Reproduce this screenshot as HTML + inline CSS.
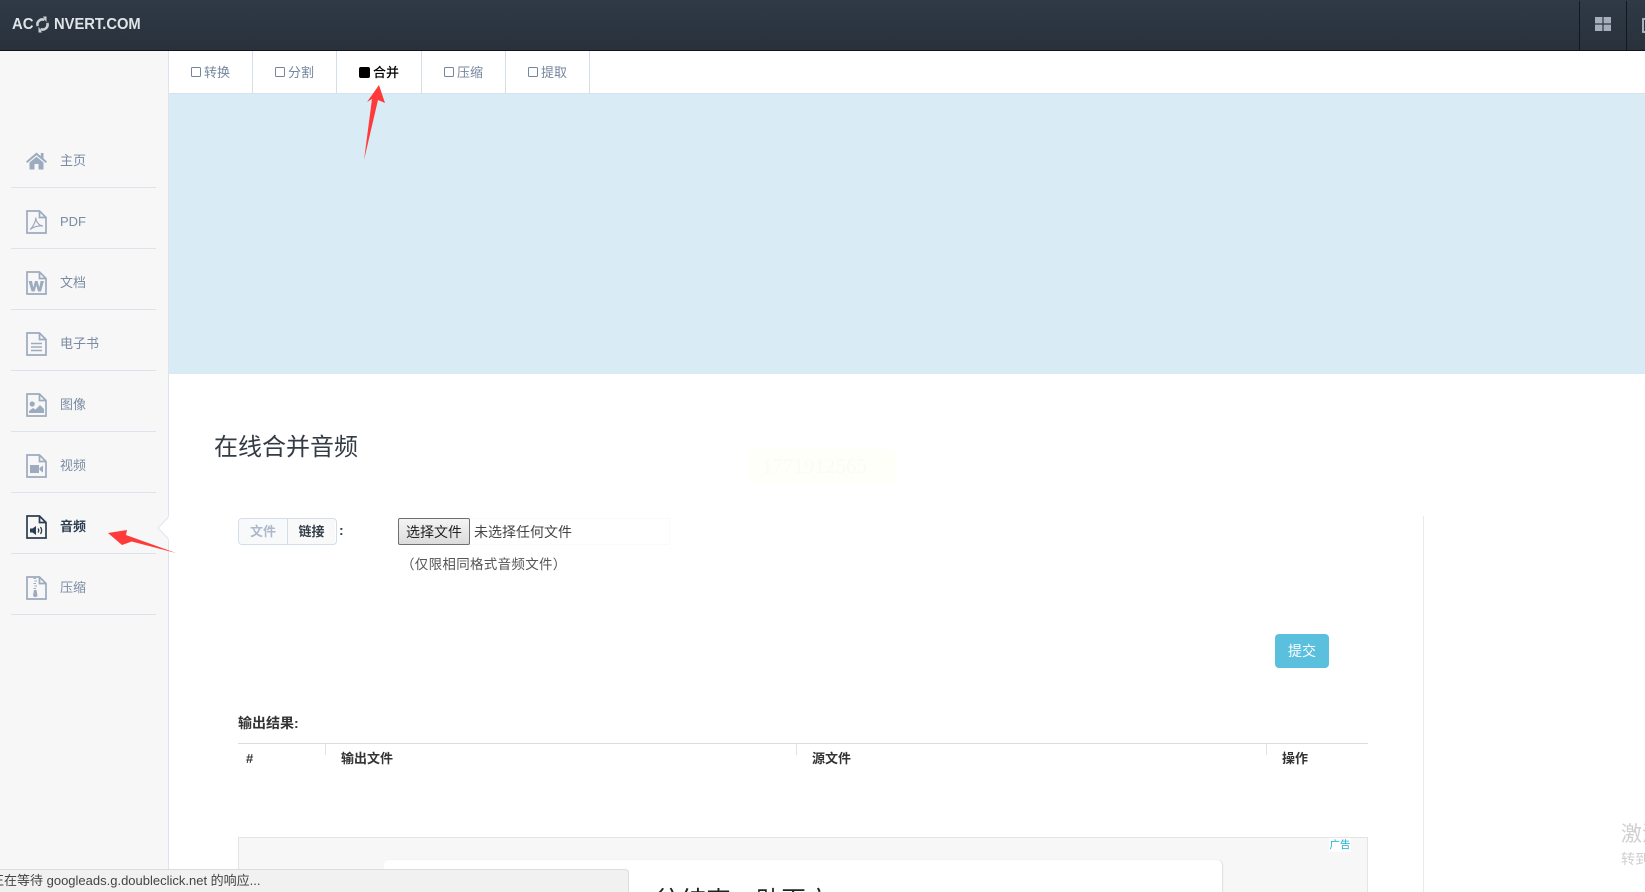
<!DOCTYPE html>
<html lang="zh-CN"><head><meta charset="utf-8"><title>在线合并音频</title>
<style>
html,body{margin:0;padding:0;width:1645px;height:892px;overflow:hidden;background:#fff}
body{position:relative;font-family:"Liberation Sans","Noto Sans CJK SC",sans-serif;font-size:13px;color:#333}
.a{position:absolute;white-space:nowrap}
.t{line-height:20px;height:20px}
.nav{color:#7a8ba3;font-size:13px;left:60px}
.hr{position:absolute;left:11px;width:145px;height:1px;background:#dde3ec}
.ic{position:absolute;left:26px;width:21px;height:24px}
.tabline{position:absolute;top:51px;width:1px;height:42px;background:#d6dfe9}
.cb{position:absolute;top:67px;width:8px;height:8px;border:1.3px solid #74869f;border-radius:1.5px}
.tab{color:#74869f;font-size:13px;top:63px}
.th{font-weight:bold;color:#333;font-size:13px;top:749px}
.vl{position:absolute;top:744px;width:1px;height:11px;background:#dfe4ea}
.clip{position:absolute;overflow:hidden}
</style></head><body>

<!-- header -->
<div class="a" style="left:0;top:0;width:1645px;height:50px;background:linear-gradient(#2e3a46,#29313c);border-bottom:1px solid #12161b"></div>
<div class="a" style="left:12px;top:15px;font-size:16px;line-height:20px;font-weight:bold;color:#dfe4e8;transform:scaleX(.93);transform-origin:0 0">AC</div>
<svg class="a" style="left:36px;top:16px" width="13" height="17" viewBox="0 0 13 17"><path d="M1.8 10A4.8 4.8 0 0 1 8.5 4M11.2 7A4.8 4.8 0 0 1 4.5 13" fill="none" stroke="#c9ced3" stroke-width="2.6"/><path d="M7 .5L10.5 .5L10.5 6.5ZM6 16.5L2.5 16.5L2.5 10.5Z" fill="#c9ced3"/></svg>
<div class="a" style="left:53.5px;top:15px;font-size:16px;line-height:20px;font-weight:bold;color:#dfe4e8;transform:scaleX(.92);transform-origin:0 0">NVERT.COM</div>
<div class="a" style="left:1579px;top:1px;width:1px;height:49px;background:#14181d"></div>
<div class="a" style="left:1626px;top:1px;width:1px;height:49px;background:#14181d"></div>
<svg class="a" style="left:1595px;top:17px" width="16" height="14"><path d="M0 0H7.4V6.4H0ZM8.6 0H16V6.4H8.6ZM0 7.6H7.4V14H0ZM8.6 7.6H16V14H8.6Z" fill="#a5aeba"/></svg>
<div class="a" style="left:1642px;top:18px;width:1px;height:11px;border:2px solid #a5aeba;border-right:0;border-radius:1px 0 0 1px"></div>

<!-- sidebar -->
<div class="a" style="left:0;top:51px;width:168px;height:841px;background:#f7f7f7;border-right:1px solid #dde4ee"></div>

<svg class="a" style="left:26px;top:152px" width="21" height="18" viewBox="0 0 21 18"><path d="M10.5 .5L0 9.5L1.2 11L10.5 3.2L19.8 11L21 9.5L17.5 6.5V1H14.8V4.2ZM3.5 10.5L10.5 4.7L17.5 10.5V17.5H12.5V12H8.5V17.5H3.5Z" fill="#9dabbf"/></svg>
<div class="a t nav" style="top:151px">主页</div><div class="hr" style="top:187px"></div>

<svg class="ic" style="top:210px" viewBox="0 0 21 24"><path d="M1 1H13.5L20 7.5V23H1Z M13.5 1V7.5H20" fill="none" stroke="#9dabbf" stroke-width="1.7"/><path d="M4 19.5C7 17 10 11 9.8 7.5C10 12 13 15.5 17 16C13 15.5 8 16.5 4 19.5Z" fill="none" stroke="#9dabbf" stroke-width="1.2"/></svg>
<div class="a t nav" style="top:212px">PDF</div><div class="hr" style="top:248px"></div>

<svg class="ic" style="top:271px" viewBox="0 0 21 24"><path d="M1 1H13.5L20 7.5V23H1Z M13.5 1V7.5H20" fill="none" stroke="#9dabbf" stroke-width="1.7"/><path d="M2.5 10H6L7.3 16.5L9 10H11.6L13.3 16.5L14.6 10H18L15 20.5H12L10.3 14.5L8.6 20.5H5.6Z" fill="#9dabbf"/></svg>
<div class="a t nav" style="top:273px">文档</div><div class="hr" style="top:309px"></div>

<svg class="ic" style="top:332px" viewBox="0 0 21 24"><path d="M1 1H13.5L20 7.5V23H1Z M13.5 1V7.5H20" fill="none" stroke="#9dabbf" stroke-width="1.7"/><path d="M5 11.5H16M5 15H16M5 18.5H16" stroke="#9dabbf" stroke-width="1.5"/></svg>
<div class="a t nav" style="top:334px">电子书</div><div class="hr" style="top:370px"></div>

<svg class="ic" style="top:393px" viewBox="0 0 21 24"><path d="M1 1H13.5L20 7.5V23H1Z M13.5 1V7.5H20" fill="none" stroke="#9dabbf" stroke-width="1.7"/><circle cx="6.2" cy="11" r="2.6" fill="#9dabbf"/><path d="M3 20V18L7 15L9.5 16.5L14 12L18 16V20Z" fill="#9dabbf"/></svg>
<div class="a t nav" style="top:395px">图像</div><div class="hr" style="top:431px"></div>

<svg class="ic" style="top:454px" viewBox="0 0 21 24"><path d="M1 1H13.5L20 7.5V23H1Z M13.5 1V7.5H20" fill="none" stroke="#9dabbf" stroke-width="1.7"/><path d="M4 11H13V19H4ZM13.5 14L17 11.5V18.5L13.5 16Z" fill="#9dabbf"/></svg>
<div class="a t nav" style="top:456px">视频</div><div class="hr" style="top:492px"></div>

<svg class="ic" style="top:515px" viewBox="0 0 21 24"><path d="M1 1H13.5L20 7.5V23H1Z M13.5 1V7.5H20" fill="none" stroke="#2d3e50" stroke-width="1.7"/><path d="M4 13.5H6.5L10 11V20L6.5 17.5H4Z" fill="#2d3e50"/><path d="M12 13.5Q13.5 15.5 12 17.5M14.5 12Q16.8 15.5 14.5 19" fill="none" stroke="#2d3e50" stroke-width="1.3"/></svg>
<div class="a t nav" style="top:517px;color:#2d3e50;font-weight:bold">音频</div><div class="hr" style="top:553px"></div>

<svg class="ic" style="top:576px" viewBox="0 0 21 24"><path d="M1 1H13.5L20 7.5V23H1Z M13.5 1V7.5H20" fill="none" stroke="#9dabbf" stroke-width="1.7"/><path d="M7.5 2.5H10M8.5 5H11M7.5 7.5H10M8.5 10H11M7.5 12.5H10" stroke="#9dabbf" stroke-width="1.1"/><path d="M8 14H10.5L11.5 19.5A2.4 2.4 0 0 1 7 19.5Z" fill="#9dabbf"/></svg>
<div class="a t nav" style="top:578px">压缩</div><div class="hr" style="top:614px"></div>

<!-- notch -->
<svg class="a" style="left:157px;top:516px" width="13" height="24"><path d="M12 0L1 12L12 24Z" fill="#fff"/><path d="M11.5 1L1 12L11.5 23" fill="none" stroke="#dde4ee"/></svg>

<!-- tabs -->
<div class="a" style="left:169px;top:51px;width:1476px;height:42px;background:#fff"></div>
<div class="tabline" style="left:252px"></div><div class="tabline" style="left:336px"></div><div class="tabline" style="left:421px"></div><div class="tabline" style="left:505px"></div><div class="tabline" style="left:589px"></div>
<span class="cb" style="left:191px"></span><div class="a t tab" style="left:204px">转换</div>
<span class="cb" style="left:275px"></span><div class="a t tab" style="left:288px">分割</div>
<span class="a" style="left:359px;top:67px;width:11px;height:11px;background:#000;border-radius:2px"></span><div class="a t tab" style="left:373px;color:#000;font-weight:500">合并</div>
<span class="cb" style="left:444px"></span><div class="a t tab" style="left:457px">压缩</div>
<span class="cb" style="left:528px"></span><div class="a t tab" style="left:541px">提取</div>

<!-- banner -->
<div class="a" style="left:169px;top:93px;width:1476px;height:281px;background:#d9ecf5;border-top:1px solid #d6e3ee;box-sizing:border-box"></div>

<!-- arrows -->
<svg class="a" style="left:0;top:0" width="1645" height="892"><path d="M379 85L385 103L378 100L364 160L372 99L367 102Z" fill="#ff3a3a"/><path d="M108 533L127 530L126 535L176 553L131.7 541.5L122 545Z" fill="#ff3a3a"/></svg>

<!-- title -->
<div class="a" style="left:214px;top:430px;font-size:24px;line-height:36px;color:#333b44">在线合并音频</div>

<!-- watermark -->
<div class="a" style="left:749px;top:449px;width:147px;height:34px;background:#fffffa;border-radius:6px"></div>
<div class="a" style="left:762px;top:454px;font-family:'Liberation Serif',serif;font-size:21px;line-height:24px;color:#fbfbf5">1771912565</div>

<!-- toggle -->
<div class="a" style="left:238px;top:518px;width:97px;height:25px;border:1px solid #d3deea;border-radius:4px;background:#fff"></div>
<div class="a" style="left:239px;top:519px;width:48px;height:25px;background:#f7f9fb;border-right:1px solid #d3deea;border-radius:3px 0 0 3px;text-align:center;line-height:25px;font-weight:bold;font-size:13px;color:#adb9c9">文件</div>
<div class="a" style="left:288px;top:519px;width:47px;height:25px;background:#f9f9f9;border-radius:0 3px 3px 0;text-align:center;line-height:25px;font-weight:bold;font-size:13px;color:#333d49">链接</div>
<div class="a" style="left:339px;top:519px;line-height:22px;font-weight:bold;font-size:14px;color:#333d49">:</div>

<!-- file input -->
<div class="a" style="left:398px;top:518px;width:270px;height:25px;border:1px solid #fafafa"></div>
<div class="a" style="left:398px;top:518px;width:70px;height:25px;border:1px solid #707070;border-radius:2px;background:linear-gradient(#f4f4f4,#dcdcdc);text-align:center;line-height:26px;font-size:14px;color:#222">选择文件</div>
<div class="a" style="left:474px;top:518px;line-height:28px;font-size:14px;color:#444">未选择任何文件</div>
<div class="a" style="left:401px;top:555px;line-height:20px;font-size:13.5px;letter-spacing:.3px;color:#555">（仅限相同格式音频文件）</div>

<!-- submit -->
<div class="a" style="left:1275px;top:634px;width:54px;height:34px;background:#5bc0de;border-radius:4px;text-align:center;line-height:34px;color:#fff;font-size:14px">提交</div>

<!-- right rule -->
<div class="a" style="left:1423px;top:516px;width:1px;height:376px;background:#eaeaea"></div>

<!-- results -->
<div class="a" style="left:238px;top:713px;line-height:20px;font-weight:bold;font-size:14px;color:#333">输出结果:</div>
<div class="a" style="left:238px;top:743px;width:1130px;height:1px;background:#dcdcdc"></div>
<div class="vl" style="left:325px"></div><div class="vl" style="left:796px"></div><div class="vl" style="left:1266px"></div>
<div class="a t th" style="left:246px">#</div>
<div class="a t th" style="left:341px">输出文件</div>
<div class="a t th" style="left:812px">源文件</div>
<div class="a t th" style="left:1282px">操作</div>

<!-- ad -->
<div class="a" style="left:238px;top:837px;width:1128px;height:55px;background:#f7f7f7;border:1px solid #e4e4e4;border-bottom:0"></div>
<div class="a" style="left:1329px;top:838px;width:22px;height:14px;background:#fff;color:#12b5d0;font-size:10.5px;line-height:14px;text-align:center">广告</div>
<div class="a" style="left:384px;top:860px;width:838px;height:32px;background:#fff;border-radius:5px 5px 0 0;box-shadow:1px 0 1px #ddd"></div>
<div class="clip" style="left:640px;top:870px;width:240px;height:22px"><div class="a" style="left:16px;top:15px;font-size:25px;line-height:32px;color:#222">往结束一贴页方</div></div>

<!-- status bubble -->
<div class="a" style="left:0;top:869px;width:629px;height:23px;background:#f1f1f1;border:1px solid #dcdcdc;border-left:0;border-bottom:0;border-radius:0 4px 0 0;box-sizing:border-box"></div>
<div class="clip" style="left:0;top:869px;width:620px;height:23px"><div class="a" style="left:-9px;top:2px;font-size:13px;line-height:20px;color:#444">正在等待 googleads.g.doubleclick.net 的响应...</div></div>

<!-- activate -->
<div class="clip" style="left:1621px;top:820px;width:24px;height:60px"><div class="a" style="left:0;top:2px;font-size:21px;line-height:26px;color:#cfcfcf">激活 Windows</div><div class="a" style="left:0;top:29px;font-size:14px;line-height:20px;color:#cfcfcf">转到"设置"以激活 Windows。</div></div>
</body></html>
